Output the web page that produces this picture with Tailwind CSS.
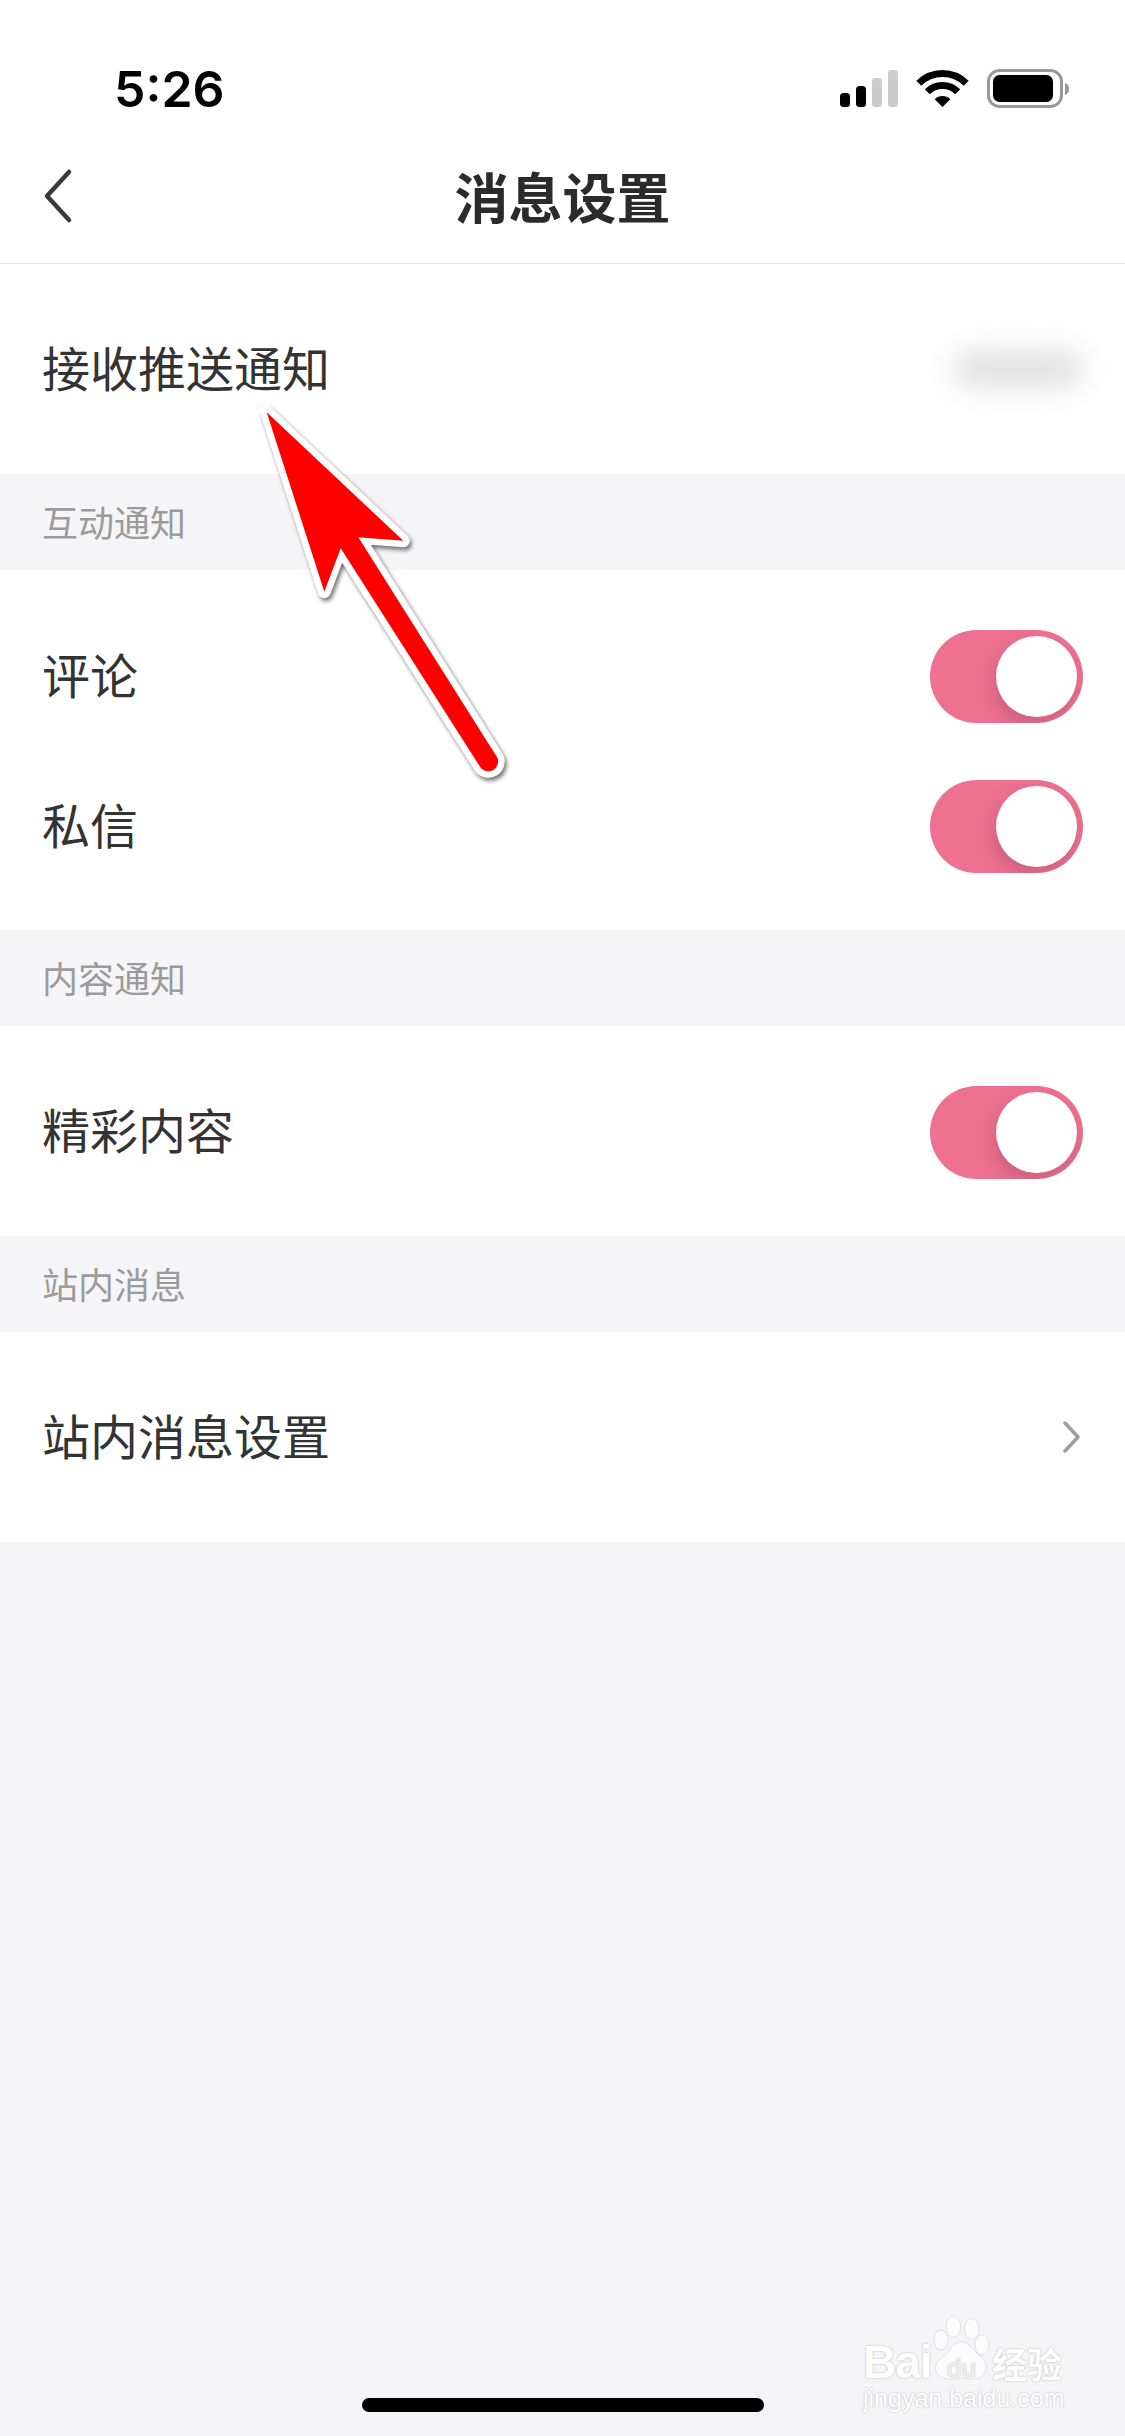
<!DOCTYPE html>
<html lang="zh">
<head>
    <meta charset="UTF-8">
    <meta name="viewport" content="width=device-width, initial-scale=1.0">
    <title>消息设置</title>
    <script src="https://cdn.jsdelivr.net/npm/@tailwindcss/browser@4"></script>
</head>
<body class="bg-[#f5f5f7] font-['Noto_Sans_CJK_SC','Noto_Sans',sans-serif]">
<div class="relative w-[1125px] h-[2436px] overflow-hidden flex flex-col">

    <!-- Status bar -->
    <div class="bg-white h-[132px] flex justify-between pl-[114px] pr-[55px] pt-[58px]">
        <span class="font-['Inter',sans-serif] font-semibold text-[50px] leading-[62px] text-black">5:26</span>
        <svg class="mt-[11px]" width="230" height="40" viewBox="840 69 230 40" fill="none">
            <rect x="840" y="93" width="10" height="14" rx="3.5" fill="#000"/>
            <rect x="856" y="86" width="10" height="21" rx="3.5" fill="#000"/>
            <rect x="872" y="78" width="10" height="29" rx="3.5" fill="#ccc"/>
            <rect x="888" y="70" width="10" height="37" rx="3.5" fill="#ccc"/>
            <path d="M918.8 83.3A33.5 33.5 0 0 1 966.2 83.3" stroke="#000" stroke-width="7"/>
            <path d="M927.3 91.8A21.5 21.5 0 0 1 957.7 91.8" stroke="#000" stroke-width="7"/>
            <path d="M942.5 107L934.7 99.2A11 11 0 0 1 950.3 99.2Z" fill="#000"/>
            <rect x="988.5" y="70.5" width="73" height="36" rx="11" stroke="#999" stroke-width="3"/>
            <rect x="993" y="75" width="60" height="27" rx="6.5" fill="#000"/>
            <path d="M1065 83C1068 84 1069 86 1069 89C1069 92 1068 94 1065 95Z" fill="#999"/>
        </svg>
    </div>

    <!-- Nav bar -->
    <div class="relative bg-white h-[132px] border-b border-[#e6e6e8] flex items-center justify-center">
        <svg class="absolute left-[42px] top-[36px]" width="32" height="56" viewBox="42 168 32 56" fill="none">
            <path d="M69 172L47 196L69 220" stroke="#3a3a3a" stroke-width="4.5" stroke-linecap="round" stroke-linejoin="round"/>
        </svg>
        <h1 class="text-[54px] leading-none font-semibold text-[#2b2b2b] mb-[3px]">消息设置</h1>
    </div>

    <!-- 接收推送通知 -->
    <div class="bg-white h-[210px] flex items-center justify-between pl-[42px] pr-[42px]">
        <span class="text-[48px] leading-none text-[#333] mb-[6px]">接收推送通知</span>
        <div class="w-[130px] h-[36px] rounded-full bg-[#e0e0e0] blur-[14px]"></div>
    </div>

    <!-- 互动通知 -->
    <div class="h-[96px] flex items-center pl-[42px]">
        <span class="text-[36px] leading-none text-[#9b9b9b] mb-[3px]">互动通知</span>
    </div>
    <div class="bg-white h-[360px] pt-[31px] flex flex-col">
        <div class="h-[150px] flex items-center justify-between pl-[42px] pr-[42px]">
            <span class="text-[48px] leading-none text-[#333] mb-[6px]">评论</span>
            <div class="w-[153px] h-[93px] rounded-full overflow-hidden bg-[#ee7190] flex items-center justify-end pr-[6px]">
                <div class="w-[81px] h-[81px] rounded-full bg-white shadow-[-2px_8px_18px_rgba(110,50,70,0.28)]"></div>
            </div>
        </div>
        <div class="h-[150px] flex items-center justify-between pl-[42px] pr-[42px]">
            <span class="text-[48px] leading-none text-[#333] mb-[6px]">私信</span>
            <div class="w-[153px] h-[93px] rounded-full overflow-hidden bg-[#ee7190] flex items-center justify-end pr-[6px]">
                <div class="w-[81px] h-[81px] rounded-full bg-white shadow-[-2px_8px_18px_rgba(110,50,70,0.28)]"></div>
            </div>
        </div>
    </div>

    <!-- 内容通知 -->
    <div class="h-[96px] flex items-center pl-[42px]">
        <span class="text-[36px] leading-none text-[#9b9b9b] mb-[3px]">内容通知</span>
    </div>
    <div class="bg-white h-[210px] flex items-center justify-between pl-[42px] pr-[42px]">
        <span class="text-[48px] leading-none text-[#333] mb-[6px]">精彩内容</span>
        <div class="w-[153px] h-[93px] mt-[3px] rounded-full overflow-hidden bg-[#ee7190] flex items-center justify-end pr-[6px]">
            <div class="w-[81px] h-[81px] rounded-full bg-white shadow-[-2px_8px_18px_rgba(110,50,70,0.28)]"></div>
        </div>
    </div>

    <!-- 站内消息 -->
    <div class="h-[96px] flex items-center pl-[42px]">
        <span class="text-[36px] leading-none text-[#9b9b9b] mb-[3px]">站内消息</span>
    </div>
    <div class="bg-white h-[210px] flex items-center justify-between pl-[42px] pr-[44px]">
        <span class="text-[48px] leading-none text-[#333] mb-[6px]">站内消息设置</span>
        <svg width="19" height="32" viewBox="0 0 19 32" fill="none">
            <path d="M3 2L16 16L3 30" stroke="#9a9ca8" stroke-width="3.5" stroke-linecap="round" stroke-linejoin="round"/>
        </svg>
    </div>

    <!-- Home indicator -->
    <div class="absolute left-[362px] top-[2398px] w-[402px] h-[14px] rounded-full bg-black"></div>

    <!-- Watermark -->
    <div class="absolute left-[863px] top-[2314px] w-[205px] h-[100px] text-white font-['Liberation_Sans',sans-serif] [text-shadow:0_0_2px_rgba(0,0,0,0.3)]">
        <svg class="absolute left-[70px] top-0" width="58" height="68" viewBox="933 2314 58 68">
            <g fill="#fbfbfb" stroke="#e2e2e4" stroke-width="1">
                <ellipse cx="953.3" cy="2326.7" rx="7.3" ry="10.7"/>
                <ellipse cx="971.7" cy="2329" rx="7.3" ry="10.7"/>
                <ellipse cx="941" cy="2340" rx="7" ry="10"/>
                <ellipse cx="982" cy="2345" rx="7" ry="10"/>
                <path d="M961 2342C970 2342 973 2350 979 2355C986 2360 988 2366 985 2372C982 2378 976 2380 968 2379C963 2378 959 2378 954 2379C946 2380 938 2378 936 2371C934 2364 939 2359 945 2355C951 2350 953 2342 961 2342Z"/>
            </g>
        </svg>
        <span class="absolute left-0 top-[23px] text-[46px] leading-[50px] font-bold tracking-[-1px]">Bai</span>
        <span class="absolute left-[84px] top-[39px] text-[26px] leading-[30px] text-[#f0f0f0]">du</span>
        <span class="absolute left-[129px] top-[25px] text-[35px] leading-[48px] font-bold font-['Noto_Sans_CJK_SC',sans-serif]">经验</span>
        <span class="absolute left-0 top-[68px] text-[25px] leading-[32px]">jingyan.baidu.com</span>
    </div>

    <!-- Red arrow annotation -->
    <svg class="absolute left-0 top-0 pointer-events-none drop-shadow-[2px_3px_2px_rgba(0,0,0,0.55)]" width="1125" height="2436" viewBox="0 0 1125 2436">
        <path d="M266.7 412.3L403.3 540.7L358.3 537.3L497.7 758.3A10 10 0 0 1 481 768.3L340.7 548.3L324.3 591.7Z" fill="#ff0000" stroke="#fff" stroke-width="13" stroke-linejoin="round"/>
        <path d="M266.7 412.3L403.3 540.7L358.3 537.3L497.7 758.3A10 10 0 0 1 481 768.3L340.7 548.3L324.3 591.7Z" fill="#ff0000"/>
    </svg>
</div>
</body>
</html>
